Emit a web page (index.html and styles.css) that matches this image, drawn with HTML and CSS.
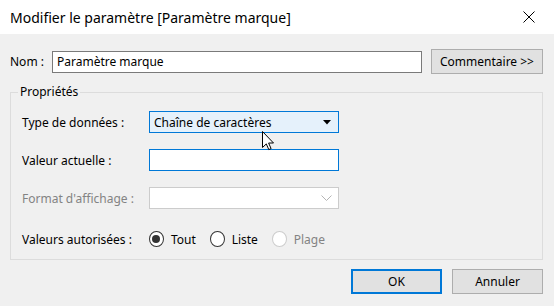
FILE: index.html
```html
<!DOCTYPE html>
<html lang="fr">
<head>
    <meta charset="UTF-8">
    <title>Modifier le paramètre</title>
    <link rel="stylesheet" href="styles.css">
</head>
<body>
    <div class="dialog">
        <div class="titlebar">
            <span class="title">Modifier le paramètre [Paramètre marque]</span>
            <svg class="close" width="12" height="12" viewBox="0 0 12 12">
                <path d="M0.5 0.5 L11.5 11.5 M11.5 0.5 L0.5 11.5" stroke="#000" stroke-width="1" fill="none"/>
            </svg>
        </div>

        <div class="content">
            <div class="name-row">
                <label class="name-label">Nom :</label>
                <div class="textbox name-input">Paramètre marque</div>
                <button class="btn comment-btn">Commentaire &gt;&gt;</button>
            </div>

            <fieldset class="props">
                <legend>Propriétés</legend>
                <div class="form-grid">
                    <label>Type de données :</label>
                    <div class="combo active">
                        <span>Chaîne de caractères</span>
                        <svg width="8" height="5" viewBox="0 0 8 5"><path d="M0 0 H8 L4 4.5 Z" fill="#000"/></svg>
                    </div>

                    <label>Valeur actuelle :</label>
                    <div class="textbox focus"></div>

                    <label class="disabled">Format d'affichage :</label>
                    <div class="combo off">
                        <span></span>
                        <svg width="11" height="6" viewBox="0 0 11 6"><path d="M0.5 0.5 L5.5 5.5 L10.5 0.5" stroke="#b4b4b4" fill="none"/></svg>
                    </div>

                    <label class="radio-label">Valeurs autorisées :</label>
                    <div class="radios">
                        <span class="radio checked"></span><span class="radio-text">Tout</span>
                        <span class="radio"></span><span class="radio-text">Liste</span>
                        <span class="radio off"></span><span class="radio-text disabled">Plage</span>
                    </div>
                </div>
            </fieldset>

            <div class="actions">
                <button class="btn ok-btn">OK</button>
                <button class="btn">Annuler</button>
            </div>
        </div>

        <!-- pointeur de la souris -->
        <svg class="cursor" width="13" height="20" viewBox="0 0 13 20">
            <path d="M0.5 0.5 L0.5 16.5 L4.3 12.9 L6.8 18.6 L9.1 17.6 L6.6 12 L11.5 12 Z" fill="#fff" stroke="#000" stroke-width="1" stroke-linejoin="miter"/>
        </svg>
    </div>
</body>
</html>
```

FILE: styles.css
```css
* {
    box-sizing: border-box;
}
body {
    margin: 0;
    font-family: "Noto Sans", "Open Sans", sans-serif;
    font-size: 12px;
    color: #000;
    background-color: #f0f0f0;
}
.dialog {
    position: relative;
    width: 554px;
    height: 306px;
    overflow: hidden;
}
.titlebar {
    height: 34px;
    background-color: #fff;
    display: flex;
    align-items: center;
    justify-content: space-between;
    padding: 0 19px 0 10px;
}
.title {
    font-size: 14px;
    color: #000;
}
.content {
    padding: 15px 11px 0 10px;
}
.name-row {
    display: flex;
    align-items: center;
    height: 25px;
}
.name-label {
    width: 42px;
}
.textbox {
    height: 22px;
    background-color: #fff;
    border: 1px solid #7a7a7a;
    padding: 0 4px;
    display: flex;
    align-items: center;
}
.name-input {
    width: 370px;
    margin-right: 9px;
}
.btn {
    font-family: inherit;
    font-size: 12px;
    color: #000;
    background-color: #e1e1e1;
    border: 1px solid #adadad;
    height: 25px;
    padding: 0;
}
.comment-btn {
    width: 112px;
}
.props {
    margin: 10px 0 0 0;
    padding: 0 0 12px 0;
    border: 1px solid #dcdcdc;
    height: 176px;
}
.props legend {
    margin-left: 7px;
    padding: 0 2px;
    line-height: 16px;
}
.form-grid {
    display: grid;
    grid-template-columns: 127px 190px;
    grid-template-rows: 22px 22px 22px 22px;
    row-gap: 16px;
    align-items: center;
    padding: 11px 0 0 11px;
}
.form-grid .radio-label {
    margin-top: 6px;
}
.disabled {
    color: #838383;
}
.focus {
    border-color: #0078d7;
}
.combo {
    height: 22px;
    display: flex;
    align-items: center;
    justify-content: space-between;
    padding: 0 6px 0 4px;
}
.combo.active {
    background-color: #e5f1fb;
    border: 1px solid #0078d7;
    padding-right: 7px;
}
.combo.off {
    background-color: #fff;
    border: 1px solid #cccccc;
}
.radios {
    display: flex;
    align-items: center;
    margin-top: 6px;
}
.radio {
    width: 16px;
    height: 16px;
    border: 1px solid #333;
    border-radius: 50%;
    background-color: #fff;
    display: inline-flex;
    align-items: center;
    justify-content: center;
}
.radio.checked::after {
    content: "";
    width: 8px;
    height: 8px;
    border-radius: 50%;
    background-color: #333;
}
.radio.off {
    border-color: #cccccc;
}
.radio-text {
    margin: 0 14px 0 7px;
}
.actions {
    display: flex;
    justify-content: flex-end;
    gap: 10px;
    margin-top: 9px;
}
.actions .btn {
    width: 91px;
}
.ok-btn {
    border: 2px solid #0078d7;
}
.cursor {
    position: absolute;
    left: 262px;
    top: 131px;
}
```
